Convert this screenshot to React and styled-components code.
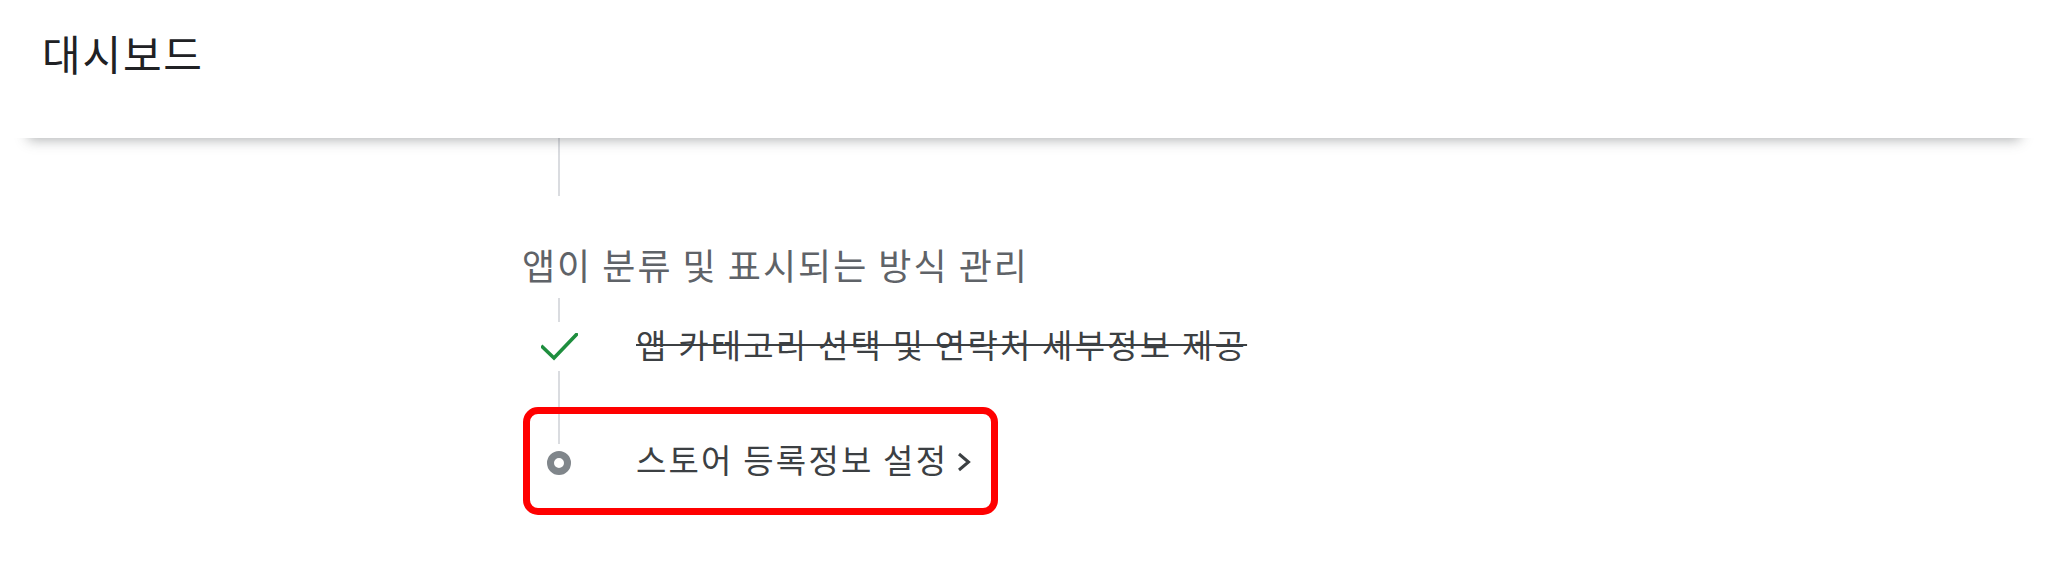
import styled, { createGlobalStyle } from "styled-components";

const GlobalStyle = createGlobalStyle`
  html, body {
    margin: 0;
    padding: 0;
    background: #ffffff;
  }
  body {
    font-family: "Noto Sans CJK KR", "Noto Sans", Roboto, sans-serif;
  }
`;

const steps = [
    { label: '앱 카테고리 선택 및 연락처 세부정보 제공', done: true },
    { label: '스토어 등록정보 설정', done: false, highlight: true },
];

function App() {
    return (
        <Page>
            <GlobalStyle />
            <Header>
                <Title>대시보드</Title>
            </Header>

            <Timeline>
                <Lead>
                    <Line />
                </Lead>
                <SectionTitle>앱이 분류 및 표시되는 방식 관리</SectionTitle>

                {steps.map((step, index) => (
                    <Step key={step.label} $done={step.done}>
                        <Rail>
                            <Line />
                            {step.done ? (
                                <CheckIcon viewBox="0 0 37 28">
                                    <polyline points="1.5,14 13,25 35.5,1.5" />
                                </CheckIcon>
                            ) : (
                                <Dot />
                            )}
                            <Line $hidden={index === steps.length - 1} />
                        </Rail>
                        <Label $done={step.done}>
                            {step.label}
                            {!step.done && (
                                <Chevron viewBox="0 0 14 20">
                                    <polyline points="2,2 11.5,10 2,18" />
                                </Chevron>
                            )}
                        </Label>
                        {step.highlight && <Highlight />}
                    </Step>
                ))}
            </Timeline>
        </Page>
    );
}

const Page = styled.div`
    min-height: 571px;
    background: #ffffff;
    overflow: hidden;
`;

const Header = styled.header`
    position: relative;
    z-index: 1;
    box-sizing: border-box;
    height: 138px;
    padding: 32px 42px 0;
    background: #ffffff;
    box-shadow: 0 30px 12px -28px rgba(60, 64, 67, 0.4);
`;

const Title = styled.h1`
    margin: 0;
    font-size: 42px;
    line-height: 42px;
    font-weight: 400;
    letter-spacing: 1.8px;
    color: #202124;
`;

const Timeline = styled.section`
    padding-left: 522px;
`;

const Lead = styled.div`
    display: flex;
    flex-direction: column;
    align-items: center;
    width: 74px;
    height: 58px;
`;

const Line = styled.div`
    flex: 1;
    width: 2px;
    background: ${({$hidden}) => ($hidden ? 'transparent' : '#dadce0')};
`;

const SectionTitle = styled.h2`
    margin: 0;
    padding: 48px 0 14px;
    font-size: 36px;
    line-height: 40px;
    font-weight: 400;
    letter-spacing: 2px;
    color: #5f6368;
`;

const Step = styled.div`
    position: relative;
    display: grid;
    grid-template-columns: 74px auto;
    column-gap: 40px;
    height: ${({$done}) => ($done ? '96px' : '138px')};
`;

const Rail = styled.div`
    display: flex;
    flex-direction: column;
    align-items: center;
`;

const CheckIcon = styled.svg`
    width: 37px;
    height: 28px;
    margin: 11px 0 10px;
    fill: none;
    stroke: #1e8e3e;
    stroke-width: 3.6;
    stroke-linecap: square;
`;

const Dot = styled.div`
    box-sizing: border-box;
    width: 24px;
    height: 24px;
    margin: 7px 0;
    border: 7px solid #80868b;
    border-radius: 50%;
`;

const Label = styled.div`
    display: flex;
    align-items: center;
    gap: 9px;
    padding-bottom: ${({$done}) => ($done ? '4px' : '8px')};
    font-size: 33px;
    line-height: 40px;
    letter-spacing: 2.2px;
    color: #3c4043;
    white-space: nowrap;
    text-decoration: ${({$done}) => ($done ? 'line-through' : 'none')};
    text-decoration-thickness: 2px;
`;

const Chevron = styled.svg`
    width: 14px;
    height: 20px;
    margin-top: 6px;
    fill: none;
    stroke: #3c4043;
    stroke-width: 3;
`;

const Highlight = styled.div`
    position: absolute;
    top: 13px;
    left: 1px;
    box-sizing: border-box;
    width: 475px;
    height: 108px;
    border: 7px solid #ff0000;
    border-radius: 15px;
    pointer-events: none;
`;

export default App;
